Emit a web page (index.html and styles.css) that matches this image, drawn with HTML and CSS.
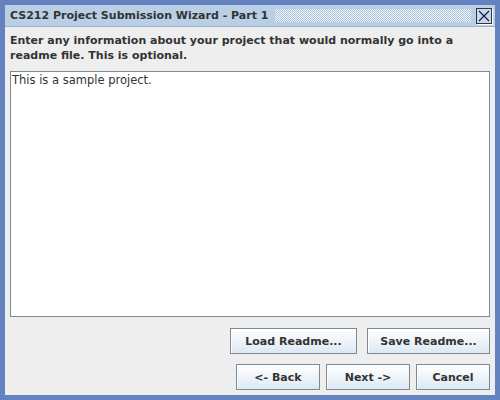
FILE: index.html
```html
<!DOCTYPE html>
<html>
<head>
<meta charset="utf-8">
<link rel="stylesheet" href="styles.css">
</head>
<body>
<div class="window">
  <div class="titlebar">
    <span class="title">CS212 Project Submission Wizard - Part 1</span>
    <span class="dots"></span>
    <span class="close"><svg width="14" height="14" viewBox="0 0 14 14"><path d="M2 2 L12 12 M12 2 L2 12" stroke="#1a1a40" stroke-width="1.2" fill="none"/></svg></span>
  </div>
  <div class="content">
    <div class="label">Enter any information about your project that would normally go into a<br>readme file. This is optional.</div>
    <div class="textarea">This is a sample project.</div>
    <div class="row row1">
      <button class="btn load">Load Readme...</button>
      <button class="btn save">Save Readme...</button>
    </div>
    <div class="row row2">
      <button class="btn back">&lt;- Back</button>
      <button class="btn next">Next -&gt;</button>
      <button class="btn cancel">Cancel</button>
    </div>
  </div>
</div>
</body>
</html>
```
FILE: styles.css
```css
html, body { margin: 0; padding: 0; }
body { width: 500px; height: 400px; overflow: hidden; }
.window {
  box-sizing: border-box;
  width: 500px; height: 400px;
  background: #6382bf;
  padding: 5px;
  display: flex; flex-direction: column;
  font-family: "DejaVu Sans", sans-serif;
  color: #333333;
}
.titlebar {
  height: 21px;
  background: #b8cfe5;
  border-bottom: 1px solid #9cb2cc;
  display: flex; align-items: center;
  padding: 0 3px 0 5px;
}
.title { font-weight: bold; font-size: 11px; white-space: nowrap; color: #333; }
.dots {
  flex: 1;
  height: 13px;
  margin: 0 5px 0 7px;
  background: repeating-conic-gradient(#f4f8fc 0 25%, #a9c1dc 0 50%) 0 0 / 2px 2px;
}
.close {
  width: 14px; height: 14px;
  border: 1px solid #333;
  box-shadow: 1px 1px 0 #fff;
  background: #c7d8ea;
  display: flex;
}
.content {
  flex: 1;
  background: #eeeeee;
  padding: 5px 5px 5px 5px;
  display: flex; flex-direction: column;
}
.label { font-weight: bold; font-size: 11px; line-height: 15px; margin: 1px 0 8px; white-space: nowrap; }
.textarea {
  flex: 1;
  background: #fff;
  border: 1px solid #7a8a99;
  font-size: 11.5px;
  line-height: 15px;
  padding: 1px 1px;
  color: #333;
}
.row { display: flex; justify-content: flex-end; gap: 10px; }
.row1 { margin-top: 11px; }
.row2 { margin-top: 10px; gap: 6px; }
.btn {
  font-family: "DejaVu Sans", sans-serif;
  font-weight: bold; font-size: 11px;
  color: #333;
  height: 26px;
  border: 1px solid #7a8a99;
  background: linear-gradient(#ffffff, #dde8f3);
  box-shadow: inset 1px 1px 0 #fff;
  padding: 0;
}
.load { width: 127px; }
.save { width: 123px; }
.back { width: 84px; }
.next { width: 84px; }
.cancel { width: 74px; }
```
